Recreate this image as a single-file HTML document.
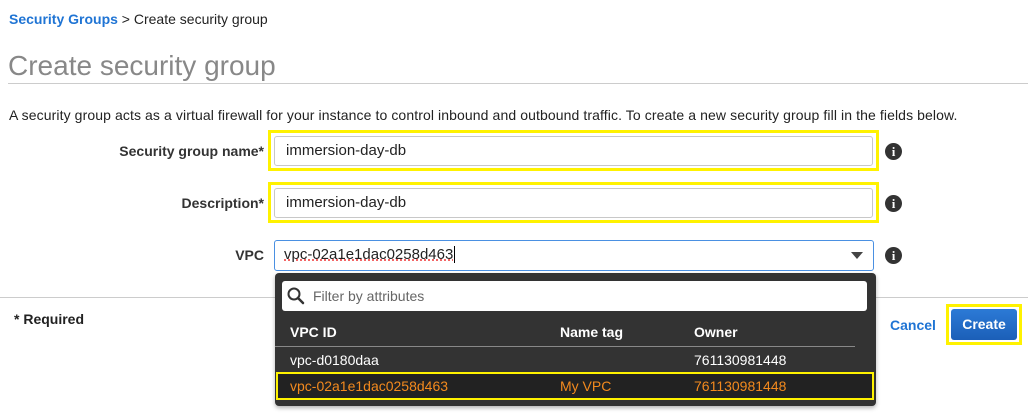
<!DOCTYPE html>
<html><head><meta charset="utf-8"><style>
*{box-sizing:border-box;margin:0;padding:0}
body{width:1028px;height:419px;background:#fff;font-family:"Liberation Sans",Arial,sans-serif;color:#222;position:relative;overflow:hidden;font-size:14px}
.a{position:absolute;white-space:nowrap}
.lbl{font-weight:bold;font-size:14px;color:#333;text-align:right;width:264px;left:0}
.yb{position:absolute;border:3px solid #fff200;}
.inp{position:absolute;background:#fff;border:1px solid #c8c8c8;border-radius:3px;font-size:15px;color:#222;padding-left:11px;line-height:28px}
.info{position:absolute;width:17px;height:17px;border-radius:50%;background:#333;color:#fff;font:bold 13px "Liberation Serif",serif;text-align:center;line-height:17px}
</style></head><body>
<div class="a" style="left:9px;top:11px;font-size:14px"><span style="color:#1f74d4;font-weight:bold">Security Groups</span> &gt; Create security group</div>
<div class="a" style="left:8px;top:50px;font-size:28px;color:#888">Create security group</div>
<div class="a" style="left:8px;top:83px;width:1020px;height:1px;background:#ccc"></div>
<div class="a" style="left:9px;top:107px;font-size:14px;letter-spacing:0.1px">A security group acts as a virtual firewall for your instance to control inbound and outbound traffic. To create a new security group fill in the fields below.</div>

<div class="a lbl" style="top:143px">Security group name*</div>
<div class="yb" style="left:268px;top:130px;width:611px;height:41px"></div>
<div class="inp" style="left:274px;top:136px;width:599px;height:30px">immersion-day-db</div>
<div class="info" style="left:885px;top:143px">i</div>

<div class="a lbl" style="top:195px">Description*</div>
<div class="yb" style="left:268px;top:182px;width:611px;height:41px"></div>
<div class="inp" style="left:274px;top:188px;width:599px;height:30px">immersion-day-db</div>
<div class="info" style="left:885px;top:195px">i</div>

<div class="a lbl" style="top:247px">VPC</div>
<div class="inp" style="left:274px;top:240px;width:600px;height:31px;border-color:#4a90e2;padding-left:9px"><span style="text-decoration:underline dotted #e33">vpc-02a1e1dac0258d463</span><span style="border-left:1px solid #000;margin-left:1px"></span></div>
<div class="a" style="left:851px;top:252px;width:0;height:0;border-left:6px solid transparent;border-right:6px solid transparent;border-top:7px solid #444"></div>
<div class="info" style="left:885px;top:247px">i</div>

<div class="a" style="left:0;top:297px;width:1028px;height:1px;background:#ccc"></div>
<div class="a" style="left:14px;top:311px;font-weight:bold;font-size:14px">* Required</div>
<div class="a" style="left:890px;top:317px;font-weight:bold;font-size:14px;color:#1f74d4">Cancel</div>
<div class="yb" style="left:946px;top:304px;width:76px;height:41px"></div>
<div class="a" style="left:951px;top:309px;width:66px;height:31px;background:linear-gradient(#2c7ad6,#1b5fb8);border-radius:3px;color:#fff;font-weight:bold;font-size:14px;text-align:center;line-height:31px">Create</div>

<div class="a" style="left:275px;top:273px;width:601px;height:133px;background:#333;border-radius:4px;box-shadow:0 2px 4px rgba(0,0,0,.3)">
 <div class="a" style="left:7px;top:8px;width:585px;height:30px;background:#fff;border-radius:3px"></div>
 <svg class="a" style="left:12px;top:14px" width="18" height="18" viewBox="0 0 18 18"><circle cx="7" cy="7" r="5.5" fill="none" stroke="#333" stroke-width="2"/><path d="M11 11l5 5" stroke="#333" stroke-width="2.5" stroke-linecap="round"/></svg>
 <div class="a" style="left:38px;top:15px;font-size:14px;color:#666">Filter by attributes</div>
 <div class="a" style="left:15px;top:51px;font-weight:bold;color:#fff">VPC ID</div>
 <div class="a" style="left:285px;top:51px;font-weight:bold;color:#fff">Name tag</div>
 <div class="a" style="left:419px;top:51px;font-weight:bold;color:#fff">Owner</div>
 <div class="a" style="left:0;top:73px;width:580px;height:1px;background:#888"></div>
 <div class="a" style="left:15px;top:79px;color:#fff">vpc-d0180daa</div>
 <div class="a" style="left:419px;top:79px;color:#fff">761130981448</div>
 <div class="a" style="left:1px;top:99px;width:598px;height:28px;border:2px solid #fff200;background:#222"></div>
 <div class="a" style="left:15px;top:105px;color:#f38a1e">vpc-02a1e1dac0258d463</div>
 <div class="a" style="left:285px;top:105px;color:#f38a1e">My VPC</div>
 <div class="a" style="left:419px;top:105px;color:#f38a1e">761130981448</div>
</div>
</body></html>
